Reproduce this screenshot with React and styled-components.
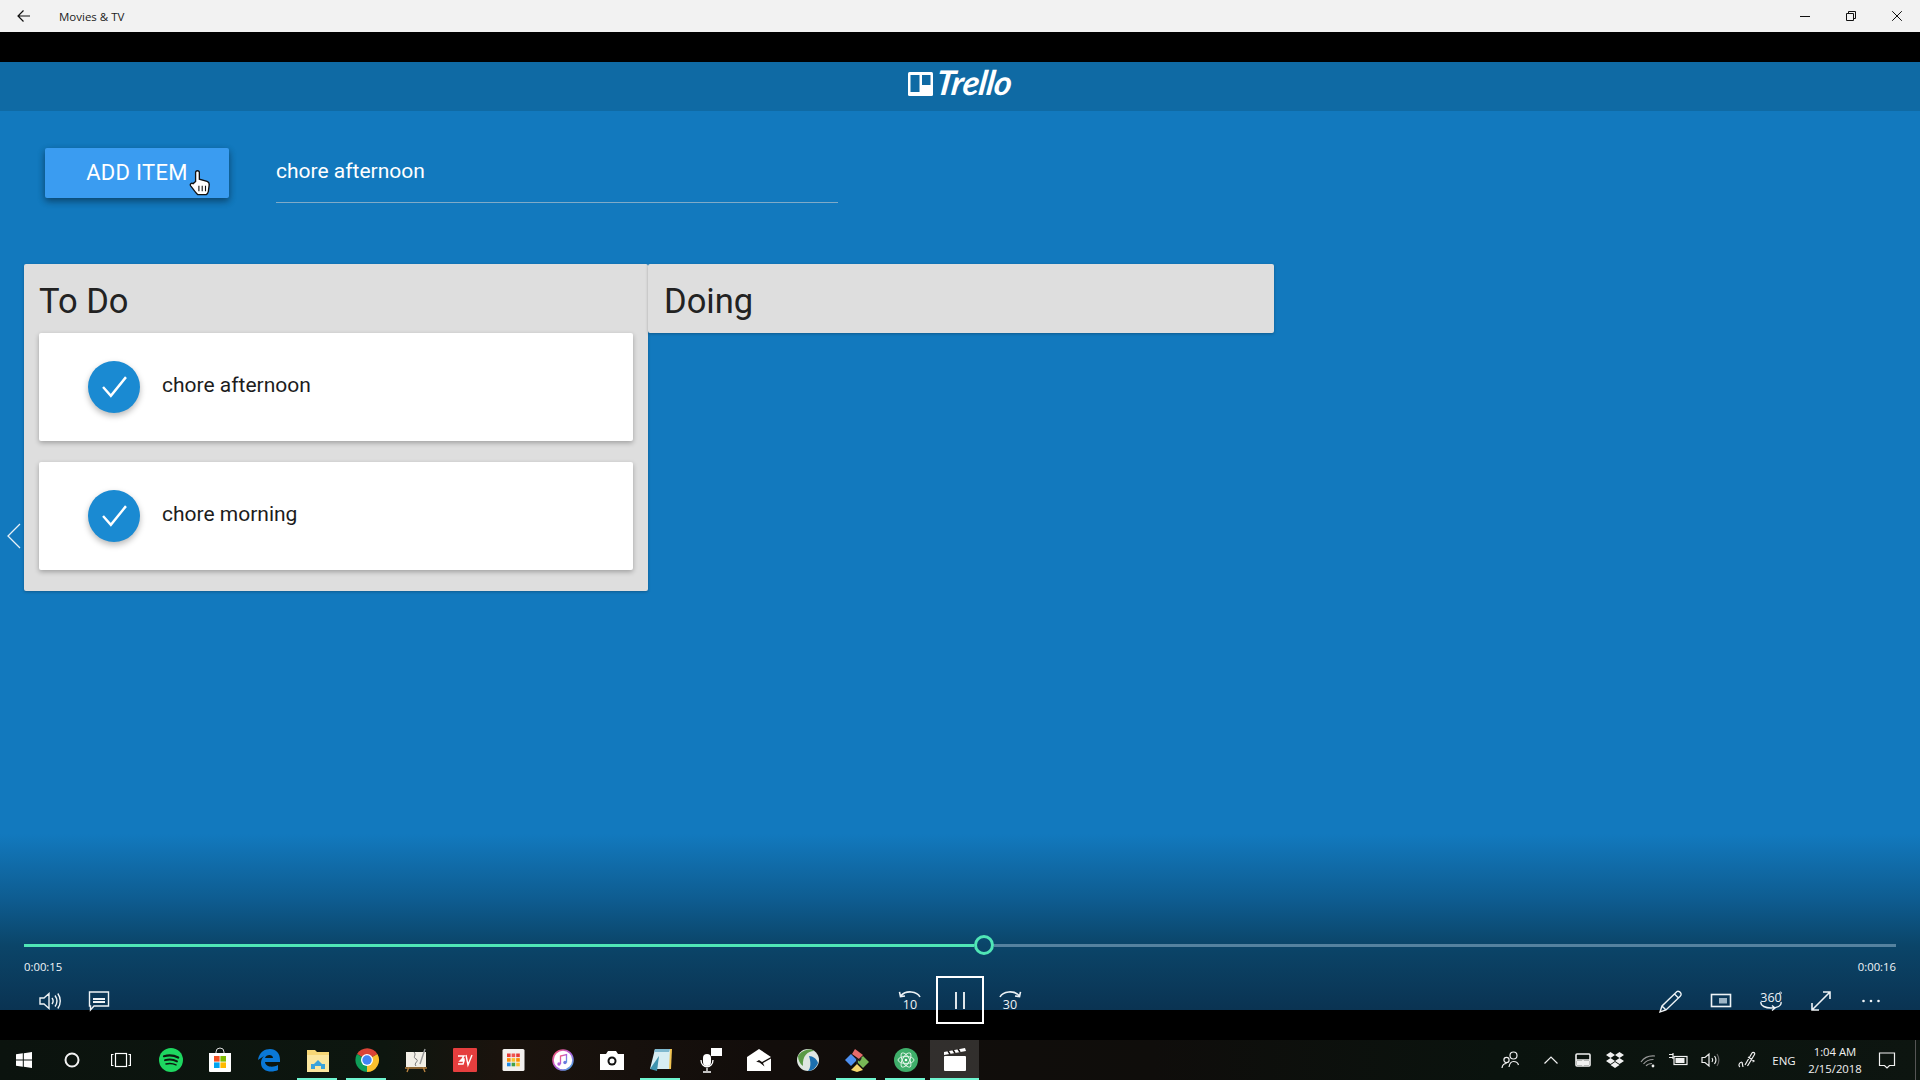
import React from "react";
import styled, { createGlobalStyle } from "styled-components";

const Global = createGlobalStyle`
  html, body { margin: 0; padding: 0; background: #000; }
  * { box-sizing: border-box; }
`;
const Screen = styled.div`
  width: 1920px; height: 1080px; overflow: hidden; display: flex; flex-direction: column; background: #000;
`;
const TitleBar = styled.div`
  height: 32px; flex: none; background: #f2f2f2; display: flex; align-items: center; color: #111;
`;
const BackSlot = styled.div`
  width: 48px; height: 32px; display: flex; align-items: center; justify-content: center;
  margin-right: 11px;
`;
const TitleText = styled.span`
  font: 11.5px "Open Sans", sans-serif; color: #222; flex: 1;
`;
const WinButton = styled.div`
  width: 46px; height: 32px; display: flex; align-items: center; justify-content: center;
`;
const VideoArea = styled.div`
  position: relative; flex: 1; min-height: 0; padding: 30px 0; background: #000; display: flex;
`;
const Frame = styled.div`
  flex: 1; display: flex; flex-direction: column; font-family: Roboto, sans-serif;
  background: linear-gradient(to bottom, #1279be 0, #1279be 772px, #0e5c90 838px, #0b4569 883px, #0a3352 948px);
`;
const Header = styled.header`
  height: 49px; flex: none; background: #0f6aa4; display: flex; align-items: center; justify-content: center; gap: 3px;
`;
const LogoBoard = styled.svg`
  width: 25px; height: 24px; margin-bottom: 5px;
`;
const LogoWord = styled.span`
  display: inline-block; font: italic 700 34px Lato, sans-serif; color: #fff; letter-spacing: -0.5px; line-height: 1;
  transform: skewX(-8deg); padding-bottom: 9px;
`;
const AddForm = styled.div`
  display: flex; padding: 37px 0 0 45px; height: 153px; flex: none;
`;
const AddButton = styled.button`
  position: relative; width: 184px; height: 50px; border: 0; border-radius: 2px; background: #3a9cf1; color: #fff;
  font: 400 22px Roboto, sans-serif; letter-spacing: .3px; padding: 0 0 1px; box-shadow: 0 3px 6px rgba(0,0,0,.28), 0 3px 8px rgba(0,0,0,.2);
`;
const Cursor = styled.svg`
  position: absolute; left: 144px; top: 21px; width: 22px; height: 27px;
`;
const ItemInput = styled.input`
  width: 562px; height: 55px; margin-left: 47px; background: transparent; border: 0; outline: 0; padding: 0 0 8px;
  border-bottom: 1.5px solid #7faac8; color: #fff; font: 400 21px Roboto, sans-serif;
`;
const Board = styled.div`
  display: flex; padding-left: 24px; align-items: flex-start;
`;
const List = styled.section`
  width: ${p => p.$w}px; background: #dedede; border-radius: 2px; box-shadow: 0 1px 3px rgba(0,0,0,.25);
  padding: 0 15px ${p => p.$empty ? 0 : 21}px ${p => p.$empty ? 16 : 15}px;
`;
const ListTitle = styled.h2`
  margin: 0; height: 69px; font: 400 34.5px/74px Roboto, sans-serif; color: #222;
`;
const Cards = styled.div`
  display: flex; flex-direction: column; gap: 21px;
`;
const Card = styled.div`
  height: 108px; background: #fff; border-radius: 2px; display: flex; align-items: center; padding-left: 49px;
  box-shadow: 0 2px 5px rgba(0,0,0,.28);
`;
const CheckDot = styled.div`
  width: 52px; height: 52px; border-radius: 50%; background: #1a8ad2; display: flex; align-items: center; justify-content: center;
  padding-bottom: 2px; box-shadow: 0 3px 6px rgba(0,0,0,.28);
`;
const CardLabel = styled.span`
  margin-left: 22px; padding-bottom: 5px; font: 400 21px Roboto, sans-serif; color: #1c1c1c;
`;
const PrevChevron = styled.svg`
  position: absolute; left: 6px; top: 491px; width: 16px; height: 26px;
`;
const Controls = styled.div`
  position: absolute; left: 0; right: 0; bottom: 16px; padding: 0 24px; color: #fff;
  font-family: "Open Sans", sans-serif;
`;
const Seek = styled.div`
  height: 20px; display: flex; align-items: center;
`;
const Played = styled.div`
  width: 950px; height: 3px; background: #50e6b6;
`;
const Knob = styled.div`
  width: 20px; height: 20px; flex: none; border-radius: 50%; border: 3px solid #50e6b6;
`;
const Rest = styled.div`
  flex: 1; height: 3px; background: #55829f;
`;
const Times = styled.div`
  height: 22px; display: flex; justify-content: space-between; align-items: center; font-size: 11.3px; color: #f0f5f8;
`;
const ButtonRow = styled.div`
  height: 47px; display: grid; grid-template-columns: 1fr auto 1fr; align-items: center;
`;
const Group = styled.div`
  display: flex; justify-content: ${p => p.$end ? "flex-end" : "flex-start"}; align-items: center;
`;
const CtlSlot = styled.div`
  width: 50px; height: 47px; display: flex; align-items: center; justify-content: center;
`;
const PauseButton = styled.div`
  width: 48px; height: 48px; margin: -1px 1px 0; border: 2.5px solid #fff; display: flex; align-items: center; justify-content: center; gap: 6px;
`;
const PauseBar = styled.i`
  width: 2px; height: 17px; background: #dfe6ea; display: block;
`;
const CtlIcon = styled.svg`
  width: 24px; height: 24px; fill: none; stroke: #eef3f6; stroke-width: ${p => p.$weight || 1.4}; overflow: visible;
`;
const DigitText = styled.text`
  font: 12.5px "Open Sans", sans-serif; fill: #eef3f6; stroke: none; text-anchor: middle;
`;
const Taskbar = styled.footer`
  height: 40px; flex: none; display: flex; align-items: center; position: relative;
  background: linear-gradient(to right, #0b130e 0, #0d160f 20%, #1a130d 26%, #120d0b 40%, #0f0d0b 60%, #0a130e 78%, #0d1510 100%);
`;
const TaskSlot = styled.div`
  position: relative; width: ${p => p.$w || 49}px; height: 40px; flex: none; display: flex; align-items: center; justify-content: center;
  background: ${p => p.$active ? "rgba(255,255,255,.14)" : "transparent"};
  &::after {
    content: ""; display: ${p => p.$open ? "block" : "none"}; position: absolute; bottom: 0; height: 2px; background: #6ff5d0;
    left: ${p => p.$active ? 0 : 4}px; right: ${p => p.$active ? 0 : 5}px;
  }
`;
const Glyph = styled.svg`
  width: ${p => p.$s || 24}px; height: ${p => p.$s || 24}px; display: block; overflow: visible;
`;
const Tray = styled.div`
  margin-left: auto; display: flex; align-items: center; color: #fff; font-family: "Open Sans", sans-serif;
`;
const TraySlot = styled.div`
  width: ${p => p.$w}px; height: 40px; display: flex; align-items: center; justify-content: center; flex: none;
`;
const TrayGlyph = styled.svg`
  width: 20px; height: 20px; overflow: visible;
  fill: ${p => p.$solid ? "#f1f1f1" : "none"};
  stroke: ${p => p.$solid ? "none" : p.$stroke || "#f1f1f1"};
  stroke-width: ${p => p.$weight || 1.2};
`;
const Lang = styled.span`
  font-size: 11.5px; color: #f1f1f1;
`;
const Clock = styled.div`
  font-size: 11.3px; line-height: 17px; text-align: center; color: #f1f1f1; white-space: nowrap;
`;
const DesktopEdge = styled.div`
  width: 1px; height: 40px; background: #555; margin: 0 4px 0 14px;
`;

const Check = () => (
  <svg width="25" height="25" viewBox="0 0 24 24" fill="none" stroke="#fff" strokeWidth="2.300"><path d="M1 12.500 8.500 21 23 3" /></svg>
);

const Store = () => (
  <Glyph viewBox="0 0 24 24">
    <path d="M8 6V4a4 4 0 0 1 8 0v2" fill="none" stroke="#ddd" strokeWidth="1" />
    <path d="M1 5h22v18a1 1 0 0 1-1 1H2a1 1 0 0 1-1-1z" fill="#fff" />
    <rect x="6" y="8" width="5.6" height="5.6" fill="#f25022" /><rect x="12.4" y="8" width="5.6" height="5.6" fill="#7fba00" />
    <rect x="6" y="14.4" width="5.6" height="5.6" fill="#00a4ef" /><rect x="12.4" y="14.4" width="5.6" height="5.6" fill="#ffb900" />
  </Glyph>
);
const Spotify = () => (
  <Glyph viewBox="0 0 24 24">
    <circle cx="12" cy="12" r="12" fill="#1ed760" />
    <g fill="none" stroke="#0d1a10" strokeLinecap="round"><path d="M5 8.2c5-1.3 10-.9 14.2 1.3" strokeWidth="2.2" /><path d="M6 12.2c4.3-1.1 8.6-.7 12 1.2" strokeWidth="1.9" /><path d="M7 15.9c3.6-.8 7.1-.5 10 1" strokeWidth="1.5" /></g>
  </Glyph>
);
const Edge = () => (
  <Glyph viewBox="0 0 24 24"><path d="M1 12C2 4 8 1 13 1c6 0 10 4 10 11v2H8c.3 5 8 6 13 3v5c-6 3-17 2-17-7 0-3 1-5 3-7-2 1-4 3-6 4zm7-2h8c0-4-7-4-8 0z" fill="#0a78d7" fillRule="evenodd" /></Glyph>
);
const Folder = () => (
  <Glyph viewBox="0 0 24 24">
    <path d="M1 2h8l2 2h12v20H1z" fill="#f6d776" /><path d="M1 7h22v17H1z" fill="#fbe79f" />
    <path d="M5 21v-5h3l4-4 4 4h3v5z" fill="#3aa3dc" /><rect x="9" y="18" width="6" height="6" fill="#fbe79f" />
  </Glyph>
);
const Chrome = () => (
  <Glyph viewBox="0 0 24 24">
    <path d="M12 12 2 6a12 12 0 0 1 20.4 0z" fill="#db4437" /><path d="M12 12 22.400 6A12 12 0 0 1 12 24z" fill="#fbc02d" />
    <path d="M12 12V24A12 12 0 0 1 2 6z" fill="#0f9d58" /><circle cx="12" cy="12" r="6" fill="#fff" /><circle cx="12" cy="12" r="4.700" fill="#4285f4" />
  </Glyph>
);
const Easel = () => (
  <Glyph viewBox="0 0 24 24">
    <path d="M5 19 3 24M19 19l2 5M1 20h22" stroke="#b5803f" strokeWidth="1.4" fill="none" />
    <path d="M2 4h20v15H2z" fill="#f2efe6" /><path d="M10 4c3 3-2 5 2 7s-3 4 0 7" stroke="#777" fill="none" /><path d="M16 16 21 1" stroke="#999" strokeWidth="1.4" />
  </Glyph>
);
const EV = () => (
  <Glyph viewBox="0 0 24 24">
    <rect width="24" height="24" rx="1" fill="#e53e3e" />
    <path d="M5 8h6l-2 3h2v1H8l-1 1h4l-1 3H5M13 7l2 10 4-10" fill="none" stroke="#fff" strokeWidth="1.4" />
  </Glyph>
);
const AppGrid = () => {
  const c = ["#e53935", "#ef5350", "#e53935", "#fb8c00", "#fbc02d", "#fb8c00", "#1e88e5", "#43a047", "#fbc02d"];
  return (
    <Glyph viewBox="0 0 24 24">
      <rect x=".500" y="1" width="22" height="22" rx="1.500" fill="#f2f0ee" />
      {c.map((f, i) => <rect key={i} x={5 + (i % 3) * 4.600} y={5.500 + Math.floor(i / 3) * 4.600} width="3.600" height="3.600" fill={f} />)}
    </Glyph>
  );
};
const ITunes = () => (
  <Glyph viewBox="0 0 24 24">
    <defs><linearGradient id="it" x1="0" y1="0" x2="1" y2="1"><stop offset="0" stopColor="#ff5a6e" /><stop offset=".5" stopColor="#b35ddb" /><stop offset="1" stopColor="#39b3e6" /></linearGradient></defs>
    <circle cx="12" cy="12" r="10" fill="#fff" stroke="url(#it)" strokeWidth="1.600" />
    <path d="M9.500 16V8l6-1.500v8" fill="none" stroke="url(#it)" strokeWidth="1.300" /><circle cx="8" cy="16" r="1.700" fill="#b35ddb" /><circle cx="14" cy="14.500" r="1.700" fill="#6a78e0" />
  </Glyph>
);
const Camera = () => (
  <Glyph viewBox="0 0 24 24">
    <path d="M0 6h6l2-3h8l2 3h6v16H0z" fill="#fff" /><circle cx="12" cy="13" r="4.500" fill="#111" /><circle cx="12" cy="13" r="2.500" fill="#fff" />
  </Glyph>
);
const Notepad = () => (
  <Glyph viewBox="0 0 24 24">
    <path d="M7 1h16l-1 20H2z" fill="#f1c453" /><path d="M6 1h15l-1 20H1z" fill="#d7edf3" /><path d="M6 1h15l-1 3H5z" fill="#7fb8cf" /><path d="M1 21 10 8l-2 15z" fill="#3e93ae" />
  </Glyph>
);
const Mic = () => (
  <Glyph viewBox="0 0 24 24">
    <rect x="13" y="0" width="11" height="8" fill="#fff" /><rect x="5" y="6" width="8" height="12" rx="4" fill="#fff" />
    <path d="M3 12c0 9 12 9 12 0M9 20v3M5 24h8" fill="none" stroke="#fff" strokeWidth="1.300" />
  </Glyph>
);
const Mail = () => (
  <Glyph viewBox="0 0 24 24">
    <path d="M0 9 12 1l12 8-9 5-3-2-12 8z" fill="#fff" /><path d="M0 11.500V23h24V10.500l-8 4.500 1.500 3.500-5-4z" fill="#fff" />
  </Glyph>
);
const GlobeApp = () => (
  <Glyph viewBox="0 0 24 24">
    <circle cx="12" cy="12" r="11" fill="#dfe6e2" /><path d="M2 8C6 2 14 0 18 3 12 3 6 8 7 18 4 16 2 12 2 8z" fill="#5a9a46" />
    <path d="M13 8c4 0 8 3 9 7-2 5-6 8-10 8 3-3 3-9 1-15z" fill="#1c6fae" />
  </Glyph>
);
const GitDiamond = () => (
  <Glyph viewBox="0 0 24 24">
    <path d="M12 14 18 8l6 6-6 6z" fill="#78b856" /><path d="M6 8 12 14 6 20 0 14z" fill="#4d8ff0" transform="translate(0 -2)" />
    <path d="M12 16l6 6-6 2-6-2z" fill="#f5d76e" /><path d="M7 6l3-5 8 6-4 4z" fill="#e56b6b" /><path d="M12 10v6M16 10l-2 3" stroke="#222" strokeWidth="1.800" />
  </Glyph>
);
const Atom = () => (
  <Glyph viewBox="0 0 24 24">
    <circle cx="12" cy="12" r="12" fill="#3fae6a" />
    <g fill="none" stroke="#e9f7ee" strokeWidth=".9"><ellipse cx="12" cy="12" rx="8" ry="3.500" /><ellipse cx="12" cy="12" rx="8" ry="3.500" transform="rotate(60 12 12)" /><ellipse cx="12" cy="12" rx="8" ry="3.500" transform="rotate(120 12 12)" /></g>
    <circle cx="12" cy="12" r="1.300" fill="#fff" />
  </Glyph>
);
const Clapper = () => (
  <Glyph viewBox="0 0 24 24">
    <path d="M1 4 22 0l1 3-22 4z" fill="#fff" /><rect x="1" y="8" width="22" height="15" rx="1" fill="#fff" />
    <path d="M5 3 7 6M10 2l2 3M15 1l2 3" stroke="#1b1715" strokeWidth="1.500" />
  </Glyph>
);

const tasks = [
  { w: 48, el: <Glyph $s={16} viewBox="0 0 16 16"><path d="M0 2.300 6.800 1.300v6.300H0zM7.800 1.200 16 0v7.600H7.800zM0 8.600h6.800v6.200L0 13.800zM7.800 8.600H16V16l-8.200-1.200z" fill="#fff" /></Glyph> },
  { w: 48, el: <Glyph $s={16} viewBox="0 0 16 16"><circle cx="8" cy="8" r="6.500" fill="none" stroke="#f2f2f2" strokeWidth="2" /></Glyph> },
  { w: 50, el: <Glyph $s={20} viewBox="0 0 20 20"><g fill="none" stroke="#fff" strokeWidth="1.200"><rect x="4.500" y="3.500" width="11" height="13" /><path d="M2.500 4.500H.6v11h1.900M17.500 4.500h1.900v11h-1.900" /></g></Glyph> },
  { el: <Spotify /> }, { el: <Store /> }, { el: <Edge /> },
  { el: <Folder />, open: true }, { el: <Chrome />, open: true }, { el: <Easel /> }, { el: <EV /> },
  { el: <AppGrid /> }, { el: <ITunes /> }, { el: <Camera /> }, { el: <Notepad />, open: true },
  { el: <Mic /> }, { el: <Mail /> }, { el: <GlobeApp /> }, { el: <GitDiamond />, open: true }, { el: <Atom />, open: true },
  { el: <Clapper />, open: true, active: true },
];

export default function App() {
  return (
    <Screen>
      <Global />
      <TitleBar>
        <BackSlot><svg width="14" height="14" viewBox="0 0 14 14" fill="none" stroke="#111" strokeWidth="1.200"><path d="M13 7H1M6.500 1.500 1 7l5.500 5.500" /></svg></BackSlot>
        <TitleText>Movies &amp; TV</TitleText>
        <WinButton><svg width="10" height="10" viewBox="0 0 10 10" stroke="#111"><path d="M0 5.500h10" /></svg></WinButton>
        <WinButton><svg width="10" height="10" viewBox="0 0 10 10" fill="none" stroke="#111"><path d="M.5 2.500h7v7h-7zM2.500 2.500v-2h7v7h-2" /></svg></WinButton>
        <WinButton><svg width="10" height="10" viewBox="0 0 10 10" stroke="#111"><path d="M.2.200l9.600 9.600M9.800.200.200 9.800" /></svg></WinButton>
      </TitleBar>
      <VideoArea>
        <Frame>
          <Header>
            <LogoBoard viewBox="0 0 25 24"><rect width="25" height="24" rx="1.500" fill="#fff" /><rect x="2.500" y="3" width="9" height="17" fill="#0f6aa4" /><rect x="14" y="3" width="8.500" height="10" fill="#0f6aa4" /></LogoBoard>
            <LogoWord>Trello</LogoWord>
          </Header>
          <AddForm>
            <AddButton>
              ADD ITEM
              <Cursor viewBox="0 0 20 24">
                <path d="M6 11V3a1.700 1.700 0 0 1 3.400 0v6l7 2c1.500.5 2.100 1.500 2 3l-.8 6c-.3 1.500-1 2.500-2 3H8c-1.500-1-3-3.500-6.500-8-1-1.500.6-3 2.300-2z" fill="#fff" stroke="#111" strokeWidth="1.200" />
                <path d="M9 15v5M12 15v5M15 15v5" stroke="#111" strokeWidth="1" />
              </Cursor>
            </AddButton>
            <ItemInput defaultValue="chore afternoon" readOnly />
          </AddForm>
          <Board>
            <List $w={624}>
              <ListTitle>To Do</ListTitle>
              <Cards>
                {["chore afternoon", "chore morning"].map(t => (
                  <Card key={t}><CheckDot><Check /></CheckDot><CardLabel>{t}</CardLabel></Card>
                ))}
              </Cards>
            </List>
            <List $w={626} $empty><ListTitle>Doing</ListTitle></List>
          </Board>
        </Frame>
        <PrevChevron viewBox="0 0 16 26" fill="none" stroke="#e8f1f7" strokeWidth="1.300"><path d="M14 1 2 13l12 12" /></PrevChevron>
        <Controls>
          <Seek><Played /><Knob /><Rest /></Seek>
          <Times><span>0:00:15</span><span>0:00:16</span></Times>
          <ButtonRow>
            <Group>
              <CtlSlot><CtlIcon viewBox="0 0 24 24"><path d="M3 9h4l5-4.500v15L7 15H3zM15 9c1.500 2 1.500 4 0 6M18 6.500c2.500 3.500 2.500 7.500 0 11M20.800 4.500c3.300 4.500 3.300 10.500 0 15" /></CtlIcon></CtlSlot>
              <CtlSlot><CtlIcon viewBox="0 0 24 24"><path d="M2.500 3h19v14H7l-3.500 4v-4h-1z" /><path d="M6 10h12M6 13h12" strokeWidth="2" /></CtlIcon></CtlSlot>
            </Group>
            <Group>
              <CtlSlot><CtlIcon viewBox="0 0 24 24" $weight={1.6}><path d="M22 8C19 2 8 1 3 6.500M1.500 2.800 2.500 7.500l4.500-.5" /><DigitText x="12" y="20">10</DigitText></CtlIcon></CtlSlot>
              <PauseButton><PauseBar /><PauseBar /></PauseButton>
              <CtlSlot><CtlIcon viewBox="0 0 24 24" $weight={1.6}><path d="M2 8C5 2 16 1 21 6.500M22.500 2.800 21.500 7.500 17 7" /><DigitText x="12" y="20">30</DigitText></CtlIcon></CtlSlot>
            </Group>
            <Group $end>
              <CtlSlot><CtlIcon viewBox="0 0 24 24"><path d="M18 2.500c1.500-1 3.500.8 4 2 .4 1 0 2-.8 2.800L7 21l-6 2 2-6zM15.500 5l4 4M3 17l4 4" /></CtlIcon></CtlSlot>
              <CtlSlot><CtlIcon viewBox="0 0 24 24" $weight={1.6}><rect x="2.500" y="5.500" width="19" height="12" /><rect x="10" y="9" width="8" height="5.500" fill="#9db5c6" stroke="none" /></CtlIcon></CtlSlot>
              <CtlSlot><CtlIcon viewBox="0 0 24 24"><DigitText x="12" y="13">360</DigitText><path d="M2 13c-1 4 5 6 10 6 6 0 11-2 10-6M13 16.500l3 2.500-3 2.500" /><circle cx="21.500" cy="4" r="1" strokeWidth=".8" /></CtlIcon></CtlSlot>
              <CtlSlot><CtlIcon viewBox="0 0 24 24" $weight={1.6}><path d="M3 21 21 3M14 3h7v7M3 14v7h7" /></CtlIcon></CtlSlot>
              <CtlSlot><CtlIcon viewBox="0 0 24 24"><g fill="#eef3f6" stroke="none"><circle cx="4.500" cy="12" r="1.300" /><circle cx="12" cy="12" r="1.300" /><circle cx="19.500" cy="12" r="1.300" /></g></CtlIcon></CtlSlot>
            </Group>
          </ButtonRow>
        </Controls>
      </VideoArea>
      <Taskbar>
        {tasks.map((t, i) => (
          <TaskSlot key={i} $w={t.w} $open={t.open} $active={t.active}>{t.el}</TaskSlot>
        ))}
        <Tray>
          <TraySlot $w={40}><TrayGlyph viewBox="0 0 20 20"><circle cx="12.500" cy="5.500" r="3.500" /><path d="M8 17c.5-3 2-5.500 4.500-5.500S17 13 17.500 15" /><circle cx="5.500" cy="10" r="2.600" /><path d="M1 18c.3-2.500 2-4.500 4.500-4.500" /></TrayGlyph></TraySlot>
          <TraySlot $w={40}><TrayGlyph viewBox="0 0 20 20"><path d="M3.500 13.500 10 7l6.500 6.500" /></TrayGlyph></TraySlot>
          <TraySlot $w={24}><TrayGlyph viewBox="0 0 20 20" $weight={1.6}><rect x="3" y="4" width="14" height="12" rx="1" /><path d="M3 10h14M10 10v6" /><rect x="4" y="11" width="12" height="4" fill="#f1f1f1" stroke="none" /></TrayGlyph></TraySlot>
          <TraySlot $w={40}><TrayGlyph viewBox="0 0 20 20" $solid><path d="M5.500 2 10 5 5.500 8 1 5zM14.500 2 19 5l-4.500 3L10 5zM5.500 8 10 11l-4.500 3L1 11zM14.500 8 19 11l-4.500 3L10 11zM5.500 15 10 12l4.500 3L10 18z" /></TrayGlyph></TraySlot>
          <TraySlot $w={26}><TrayGlyph viewBox="0 0 20 20" $stroke="#9a9a9a"><path d="M3 12c3.500-5 9-6.500 14-6M5.500 14c2.500-3.500 6-4.500 10-4.500M8 16c1.500-2 3-2.500 6-2.500" /><circle cx="15" cy="16" r="1.400" fill="#f1f1f1" stroke="none" /></TrayGlyph></TraySlot>
          <TraySlot $w={36}><TrayGlyph viewBox="0 0 20 20"><rect x="5" y="6.500" width="13" height="8" /><rect x="6.500" y="8" width="9" height="5" fill="#f1f1f1" stroke="none" /><path d="M0 4.500h4M0 7.500h4M4 3v6" /></TrayGlyph></TraySlot>
          <TraySlot $w={26}><TrayGlyph viewBox="0 0 20 20"><path d="M2 7.500h3L9 4v12l-4-3.500H2zM12 8c1 1.300 1 2.700 0 4M14.500 6c1.800 2.500 1.800 5.500 0 8" /><path d="M17 4c2.500 4 2.500 8 0 12" stroke="#666" /></TrayGlyph></TraySlot>
          <TraySlot $w={48}><TrayGlyph viewBox="0 0 20 20"><path d="M8 15 15 3c1-1.500 3.500 0 2.500 1.500L10.500 16M3 17c-2-1-1-5 2-5M11 7l6 4-1.500 1" /><path d="M5 12l1 5" /></TrayGlyph></TraySlot>
          <TraySlot $w={26}><Lang>ENG</Lang></TraySlot>
          <TraySlot $w={76}><Clock>1:04 AM<br />2/15/2018</Clock></TraySlot>
          <TraySlot $w={28}><TrayGlyph viewBox="0 0 20 20"><path d="M2.500 3h15v12.500h-5L10 18l-2.500-2.500h-5z" /></TrayGlyph></TraySlot>
          <DesktopEdge />
        </Tray>
      </Taskbar>
    </Screen>
  );
}
